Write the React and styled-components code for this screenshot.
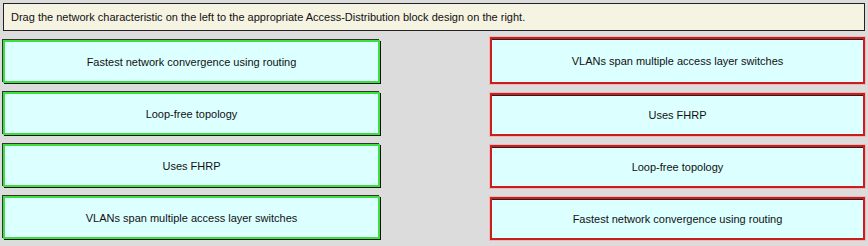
import React from 'react';
import styled, { createGlobalStyle } from 'styled-components';

const Global = createGlobalStyle`
  html, body {
    margin: 0;
    padding: 0;
    background: #dcdcdc;
  }
  body {
    font-family: "Liberation Sans", Arial, sans-serif;
    width: 868px;
    height: 246px;
    overflow: hidden;
  }
`;

const Page = styled.div`
  padding: 3px 3px 0 3px;
`;

const Prompt = styled.div`
  height: 26px;
  border: 1px solid #222;
  background: #f5f3e1;
  display: flex;
  align-items: center;
  padding-left: 7px;
  font-size: 11px;
  color: #111;
`;

const Board = styled.div`
  display: grid;
  grid-template-columns: 377px 375px;
  justify-content: space-between;
  margin-top: 6px;
  margin-right: 0;
`;

const Column = styled.div`
  display: flex;
  flex-direction: column;
  gap: 9px;
  padding-top: ${p => (p.$offset ? '0px' : '3px')};
`;

const Card = styled.div`
  box-sizing: border-box;
  height: ${p => (p.$tall ? '47px' : '43px')};
  background: #dcffff;
  border: 2px solid ${p => (p.$match ? '#3ee03e' : '#c81e1e')};
  box-shadow: ${p =>
    p.$match
      ? '1px 1px 0 #111, -1px -1px 0 #333'
      : '0 0 0 1px #f2b6b6, inset 0 1px 0 #222'};
  display: flex;
  align-items: center;
  justify-content: center;
  font-size: 11px;
  color: #111;
`;

const left = [
  'Fastest network convergence using routing',
  'Loop-free topology',
  'Uses FHRP',
  'VLANs span multiple access layer switches',
];

const right = [
  'VLANs span multiple access layer switches',
  'Uses FHRP',
  'Loop-free topology',
  'Fastest network convergence using routing',
];

export default function App() {
  return (
    <>
      <Global />
      <Page>
        <Prompt>
          Drag the network characteristic on the left to the appropriate Access-Distribution block design on the right.
        </Prompt>
        <Board>
          <Column>
            {left.map(t => (
              <Card key={t} $match>
                {t}
              </Card>
            ))}
          </Column>
          <Column $offset>
            {right.map((t, i) => (
              <Card key={t} $tall={i === 0}>
                {t}
              </Card>
            ))}
          </Column>
        </Board>
      </Page>
    </>
  );
}
